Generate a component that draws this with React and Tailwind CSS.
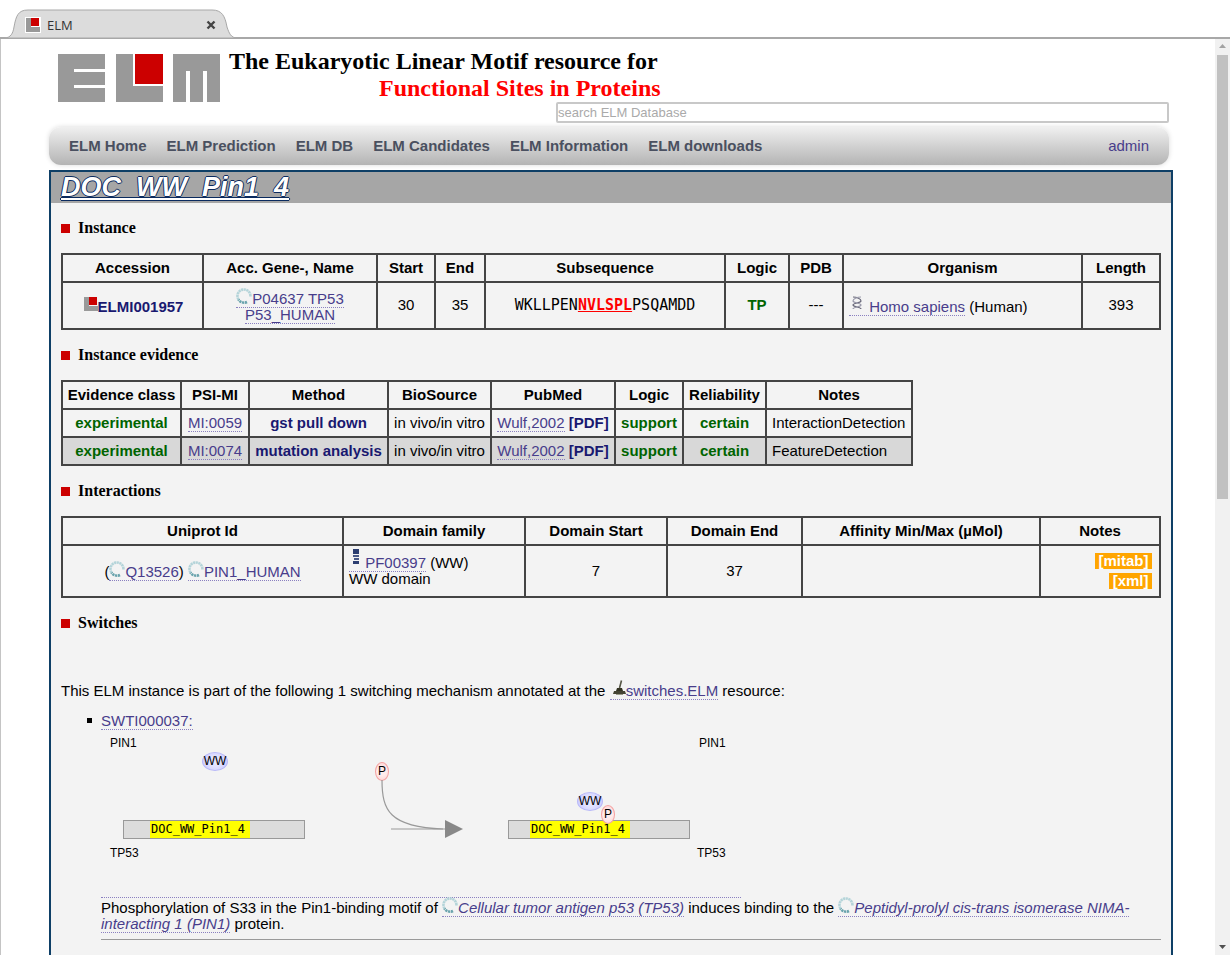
import React from "react";

const sans = "font-['Liberation_Sans',Arial,sans-serif]";

const ElmMark = () => (
  <svg width="14" height="14" viewBox="0 0 14 14" className="inline-block align-[1px] ml-[2px]">
    <path d="M0 0h5v9h9v5H0z" fill="#999" />
    <rect x="5" y="0" width="8" height="8" fill="#c00" />
  </svg>
);

const ProteinIcon = () => (
  <svg width="16" height="16" viewBox="0 0 16 16" className="inline-block align-[6px] -my-[6px]">
    <path d="M2.5 11.5A6.5 6.5 0 1 1 14.4 8.8" fill="none" stroke="#b4d4d9" strokeWidth="2.6" strokeDasharray="2.2 0.5" />
    <path d="M11 14A6.5 6.5 0 0 1 2.5 11.5" fill="none" stroke="#6aa4ad" strokeWidth="2.6" strokeDasharray="2.2 0.6" />
  </svg>
);

const TaxIcon = () => (
  <svg width="12" height="14" viewBox="0 0 12 14" className="inline-block align-[5px] -my-[3px] ml-[2px] mr-[2px]">
    <path d="M2 1C6 1 10 3 10 5S2 7 2 9s8 2 8 4" fill="none" stroke="#667" strokeWidth="1.2" />
    <path d="M10 1C6 1 2 3 2 5s8 2 8 4-8 2-8 4" fill="none" stroke="#99a" strokeWidth="1.2" />
  </svg>
);

const PfamIcon = () => (
  <svg width="10" height="16" viewBox="0 0 10 16" className="inline-block align-[9px] -my-[6px] ml-[2px]">
    <rect x="2" y="0" width="6" height="5" fill="#2c3e70" />
    <rect x="2" y="6" width="6" height="2" fill="#4a5a88" />
    <rect x="3" y="9" width="5" height="2" fill="#4a5a88" />
    <rect x="2" y="12" width="6" height="3" fill="#2c3e70" />
  </svg>
);

const SwitchIcon = () => (
  <svg width="14" height="18" viewBox="0 0 14 18" className="inline-block align-[2px] -my-[3px] ml-[2px]">
    <path d="M9.5 1.5 7.5 9" stroke="#554" strokeWidth="1.6" fill="none" />
    <path d="M5 9h5l1 3H4z" fill="#332" />
    <path d="M2 12h11l1 3H1z" fill="#443" />
    <rect x="4" y="15" width="7" height="1" fill="#998" />
  </svg>
);

const A = ({ children, className = "" }) => (
  <a className={`text-[#483d8b] border-b border-dotted border-[#8a80c0] ${className}`}>{children}</a>
);

const Section = ({ title, className = "" }) => (
  <div className={`flex items-center h-[18px] ${className}`}>
    <span className="w-[9px] h-[9px] bg-[#c00] mr-[8px]" />
    <span className="font-['Liberation_Serif',serif] font-bold text-[16px] text-black">{title}</span>
  </div>
);

const Th = ({ children }) => (
  <th className="border-2 border-[#444] font-bold text-black text-center align-middle p-0">{children}</th>
);

const Td = ({ children, className = "" }) => (
  <td className={`border-2 border-[#444] align-middle px-[5px] py-0 ${className}`}>{children}</td>
);

const Green = ({ children }) => <span className="font-bold text-[#006400]">{children}</span>;

const Navy = ({ children }) => <span className="font-bold text-[#191970]">{children}</span>;

const navItems = ["ELM Home", "ELM Prediction", "ELM DB", "ELM Candidates", "ELM Information", "ELM downloads"];

const evidence = [
  ["experimental", "MI:0059", "gst pull down", "InteractionDetection", ""],
  ["experimental", "MI:0074", "mutation analysis", "FeatureDetection", "bg-[#d8d8d8]"],
];

const Bar = ({ left }) => (
  <div className={`absolute top-[86px] h-[19px] w-[182px] bg-[#dcdcdc] border border-[#999] ${left}`} />
);

const Motif = ({ left }) => (
  <div className={`absolute top-[87px] h-[17px] w-[100px] bg-[#ff0] font-['DejaVu_Sans_Mono',monospace] text-[12px] leading-[17px] text-black pl-px ${left}`}>
    DOC_WW_Pin1_4
  </div>
);

const Ww = ({ className }) => (
  <div className={`absolute w-[26px] h-[19px] rounded-[50%] bg-[radial-gradient(circle,#e4e4ff_30%,#c4c4ff_100%)] border border-[#b8b8f8] text-[12px] leading-[17px] text-center text-black ${className}`}>WW</div>
);

const Phos = ({ className }) => (
  <div className={`absolute w-[14px] h-[19px] rounded-[50%] bg-[radial-gradient(circle,#ffecec_40%,#fbd0d0_100%)] border border-[#f4a0a0] text-[12px] leading-[17px] text-center text-black ${className}`}>P</div>
);

const Label = ({ className, children }) => (
  <div className={`absolute text-[12px] leading-[14px] text-black ${className}`}>{children}</div>
);

export default function App() {
  return (
    <div className={`h-[955px] w-[1230px] overflow-hidden bg-white flex flex-col ${sans}`}>
      {/* browser tab strip */}
      <div className="relative h-[39px] shrink-0 border-b-2 border-[#a8a8a8]">
        <svg width="240" height="30" viewBox="0 0 240 30" className="absolute left-0 top-[9px]">
          <path d="M4 29C11 29 13 24 14 18 16 7 18 1 28 1H212C222 1 225 7 227 18 229 24 231 29 237 29Z" fill="#dcdcdc" stroke="#a8a8a8" />
        </svg>
        <div className="absolute left-[25px] top-[17px] w-[16px] h-[16px] bg-white p-px">
          <svg width="14" height="14" viewBox="0 0 14 14">
            <path d="M0 0h5v9h9v5H0z" fill="#999" />
            <rect x="5" y="0" width="8" height="8" fill="#c00" />
          </svg>
        </div>
        <span className="absolute left-[47px] top-[16px] text-[13px] leading-[18px] text-[#333] font-['Open_Sans',sans-serif]">ELM</span>
        <svg width="10" height="10" viewBox="0 0 10 10" className="absolute left-[206px] top-[20px]">
          <path d="M1.5 1.5 8.5 8.5M8.5 1.5 1.5 8.5" stroke="#444" strokeWidth="2.4" />
        </svg>
      </div>

      <div className="flex flex-1 min-h-0">
        <div className="flex-1 min-w-0 border-l border-[#c4c4c4] pl-[48px]">
          {/* header */}
          <div className="flex h-[88px] w-[1120px]">
            <svg width="163" height="48" viewBox="0 0 163 48" className="ml-[8px] mt-[15px] shrink-0">
              <rect x="1" y="0" width="47" height="48" fill="#999" />
              <rect x="17" y="15" width="31" height="3" fill="#fff" />
              <rect x="17" y="31" width="31" height="3" fill="#fff" />
              <path d="M59 0h17v32h30v16H59z" fill="#999" />
              <rect x="78" y="0" width="28" height="30" fill="#c00" />
              <rect x="116" y="0" width="47" height="48" fill="#999" />
              <rect x="129" y="17" width="4" height="31" fill="#fff" />
              <rect x="146" y="17" width="4" height="31" fill="#fff" />
            </svg>
            <div className="ml-[9px] mt-[9px] w-[940px]">
              <h1 className="font-['Liberation_Serif',serif] font-bold text-[24px] leading-[27px] text-black">
                The Eukaryotic Linear Motif resource for
              </h1>
              <h2 className="font-['Liberation_Serif',serif] font-bold text-[24px] leading-[27px] text-[#f00] pl-[150px]">
                Functional Sites in Proteins
              </h2>
              <input
                placeholder="search ELM Database"
                className="block ml-[327px] w-[613px] h-[21px] bg-white border-2 border-[#c8c8c8] rounded-[2px] px-0 text-[13px] placeholder:text-[#aaa] outline-none"
              />
            </div>
          </div>

          {/* nav */}
          <div className="flex items-center justify-between w-[1120px] h-[38px] rounded-[12px] bg-gradient-to-b from-[#f0f0f0] to-[#b4b4b4] shadow-[0_0_5px_rgba(0,0,0,0.15)] pl-[20px] pr-[20px]">
            <div className="flex gap-[20px]">
              {navItems.map((item) => (
                <span key={item} className="font-bold text-[15px] text-[#4a5060]">{item}</span>
              ))}
            </div>
            <span className="text-[15px] text-[#483d8b]">admin</span>
          </div>

          {/* main panel */}
          <div className="mt-[5px] w-[1124px] h-[900px] border-2 border-[#0e3f66] border-b-0 bg-[#f3f3f3] text-[15px] text-black">
            <div className="h-[31px] bg-[#a6a6a6] pl-[10px]">
              <span className="font-bold italic text-[27px] leading-[31px] text-white underline [text-shadow:-1px_0_#0a2a5e,1px_0_#0a2a5e,0_1px_#0a2a5e,0_-1px_#0a2a5e]">
                DOC_WW_Pin1_4
              </span>
            </div>

            <div className="px-[10px]">
              <Section title="Instance" className="mt-[16px]" />
              <table className="mt-[16px] w-[1098px] border-collapse table-fixed">
                <colgroup>
                  <col className="w-[141px]" />
                  <col className="w-[174px]" />
                  <col className="w-[58px]" />
                  <col className="w-[50px]" />
                  <col className="w-[240px]" />
                  <col className="w-[64px]" />
                  <col className="w-[54px]" />
                  <col className="w-[239px]" />
                  <col className="w-[78px]" />
                </colgroup>
                <thead>
                  <tr className="h-[28px]">
                    <Th>Accession</Th>
                    <Th>Acc. Gene-, Name</Th>
                    <Th>Start</Th>
                    <Th>End</Th>
                    <Th>Subsequence</Th>
                    <Th>Logic</Th>
                    <Th>PDB</Th>
                    <Th>Organism</Th>
                    <Th>Length</Th>
                  </tr>
                </thead>
                <tbody>
                  <tr className="h-[47px] text-center">
                    <Td className="pt-[4px]">
                      <ElmMark />
                      <Navy>ELMI001957</Navy>
                    </Td>
                    <Td className="leading-[16px] pt-[3px]">
                      <A><ProteinIcon />P04637 TP53</A>
                      <br />
                      <A>P53_HUMAN</A>
                    </Td>
                    <Td>30</Td>
                    <Td>35</Td>
                    <Td className="font-['DejaVu_Sans_Mono',monospace]">
                      WKLLPEN<span className="font-bold text-[#f00] underline">NVLSPL</span>PSQAMDD
                    </Td>
                    <Td><Green>TP</Green></Td>
                    <Td>---</Td>
                    <Td className="text-left pt-[4px]">
                      <A><TaxIcon /> Homo sapiens</A> (Human)
                    </Td>
                    <Td>393</Td>
                  </tr>
                </tbody>
              </table>

              <Section title="Instance evidence" className="mt-[16px]" />
              <table className="mt-[16px] w-[850px] border-collapse table-fixed">
                <colgroup>
                  <col className="w-[119px]" />
                  <col className="w-[68px]" />
                  <col className="w-[139px]" />
                  <col className="w-[103px]" />
                  <col className="w-[124px]" />
                  <col className="w-[68px]" />
                  <col className="w-[83px]" />
                  <col className="w-[146px]" />
                </colgroup>
                <thead>
                  <tr className="h-[28px]">
                    <Th>Evidence class</Th>
                    <Th>PSI-MI</Th>
                    <Th>Method</Th>
                    <Th>BioSource</Th>
                    <Th>PubMed</Th>
                    <Th>Logic</Th>
                    <Th>Reliability</Th>
                    <Th>Notes</Th>
                  </tr>
                </thead>
                <tbody>
                  {evidence.map(([kind, mi, method, notes, bg]) => (
                    <tr key={mi} className={`h-[28px] ${bg}`}>
                      <Td className="text-center"><Green>{kind}</Green></Td>
                      <Td className="text-center"><A>{mi}</A></Td>
                      <Td className="text-center !px-0"><Navy>{method}</Navy></Td>
                      <Td className="text-center !px-0">in vivo/in vitro</Td>
                      <Td className="text-center !px-0"><A>Wulf,2002</A> <Navy>[PDF]</Navy></Td>
                      <Td className="text-center"><Green>support</Green></Td>
                      <Td className="text-center"><Green>certain</Green></Td>
                      <Td>{notes}</Td>
                    </tr>
                  ))}
                </tbody>
              </table>

              <Section title="Interactions" className="mt-[16px]" />
              <table className="mt-[16px] w-[1098px] border-collapse table-fixed">
                <colgroup>
                  <col className="w-[281px]" />
                  <col className="w-[182px]" />
                  <col className="w-[142px]" />
                  <col className="w-[135px]" />
                  <col className="w-[238px]" />
                  <col className="w-[120px]" />
                </colgroup>
                <thead>
                  <tr className="h-[28px]">
                    <Th>Uniprot Id</Th>
                    <Th>Domain family</Th>
                    <Th>Domain Start</Th>
                    <Th>Domain End</Th>
                    <Th>Affinity Min/Max (µMol)</Th>
                    <Th>Notes</Th>
                  </tr>
                </thead>
                <tbody>
                  <tr className="h-[52px]">
                    <Td className="text-center pt-[2px]">
                      (<A><ProteinIcon />Q13526</A>) <A><ProteinIcon />PIN1_HUMAN</A>
                    </Td>
                    <Td className="leading-[16px]">
                      <A><PfamIcon /> PF00397</A> (WW)
                      <br />
                      WW domain
                    </Td>
                    <Td className="text-center pt-px">7</Td>
                    <Td className="text-center pt-px">37</Td>
                    <Td />
                    <Td className="text-right !px-[7px]">
                      <div className="flex flex-col items-end gap-[4px]">
                        <span className="bg-[#ffa500] text-white font-bold leading-[16px] px-[3.5px]">[mitab]</span>
                        <span className="bg-[#ffa500] text-white font-bold leading-[16px] px-[3.5px]">[xml]</span>
                      </div>
                    </Td>
                  </tr>
                </tbody>
              </table>

              <Section title="Switches" className="mt-[16px]" />
              <p className="mt-[49px] leading-[20px]">
                This ELM instance is part of the following 1 switching mechanism annotated at the{" "}
                <A><SwitchIcon />switches.ELM</A> resource:
              </p>

              <ul className="mt-[9px] ml-[40px]">
                <li className="relative">
                  <span className="absolute left-[-14px] top-[8px] w-[5px] h-[5px] bg-black" />
                  <A>SWTI000037:</A>
                  {/* switch diagram, free canvas */}
                  <div className="relative mt-px h-[163px]">
                    <Label className="left-[9px] top-[2px]">PIN1</Label>
                    <Label className="left-[598px] top-[2px]">PIN1</Label>
                    <Label className="left-[9px] top-[112px]">TP53</Label>
                    <Label className="left-[596px] top-[112px]">TP53</Label>
                    <Ww className="left-[101px] top-[18px]" />
                    <Phos className="left-[274px] top-[28px]" />
                    <Bar left="left-[22px]" />
                    <Motif left="left-[49px]" />
                    <svg width="90" height="70" viewBox="0 0 90 70" className="absolute left-[280px] top-[46px]">
                      <path d="M1 0C1 30 8 47 62 49" fill="none" stroke="#999" strokeWidth="1.2" />
                      <path d="M10 49H65" stroke="#999" strokeWidth="1.2" />
                      <path d="M64 40 82 49 64 58Z" fill="#888" />
                    </svg>
                    <Bar left="left-[407px]" />
                    <Motif left="left-[429px]" />
                    <Ww className="left-[476px] top-[58px]" />
                    <Phos className="left-[500px] top-[71px]" />
                  </div>
                  <div className="border-t border-dotted border-[#8a80c0] w-[640px]" />
                  <p className="leading-[16px] mt-[2px]">
                    Phosphorylation of S33 in the Pin1-binding motif of{" "}
                    <A className="italic"><ProteinIcon />Cellular tumor antigen p53 (TP53)</A> induces binding to the{" "}
                    <A className="italic"><ProteinIcon />Peptidyl-prolyl cis-trans isomerase NIMA-interacting 1 (PIN1)</A> protein.
                  </p>
                  <div className="mt-[7px] border-t border-[#999]" />
                </li>
              </ul>
            </div>
          </div>
        </div>

        {/* scrollbar */}
        <div className="w-[15px] shrink-0 bg-[#f1f1f1] flex flex-col items-center">
          <svg width="15" height="16" viewBox="0 0 15 16" className="shrink-0">
            <path d="M7.5 5 11 9H4z" fill="#a3a3a3" />
          </svg>
          <div className="w-[11px] h-[444px] bg-[#c1c1c1] shrink-0" />
          <div className="flex-1" />
          <svg width="15" height="16" viewBox="0 0 15 16" className="shrink-0">
            <path d="M4 6h7l-3.5 4z" fill="#505050" />
          </svg>
        </div>
      </div>
    </div>
  );
}
